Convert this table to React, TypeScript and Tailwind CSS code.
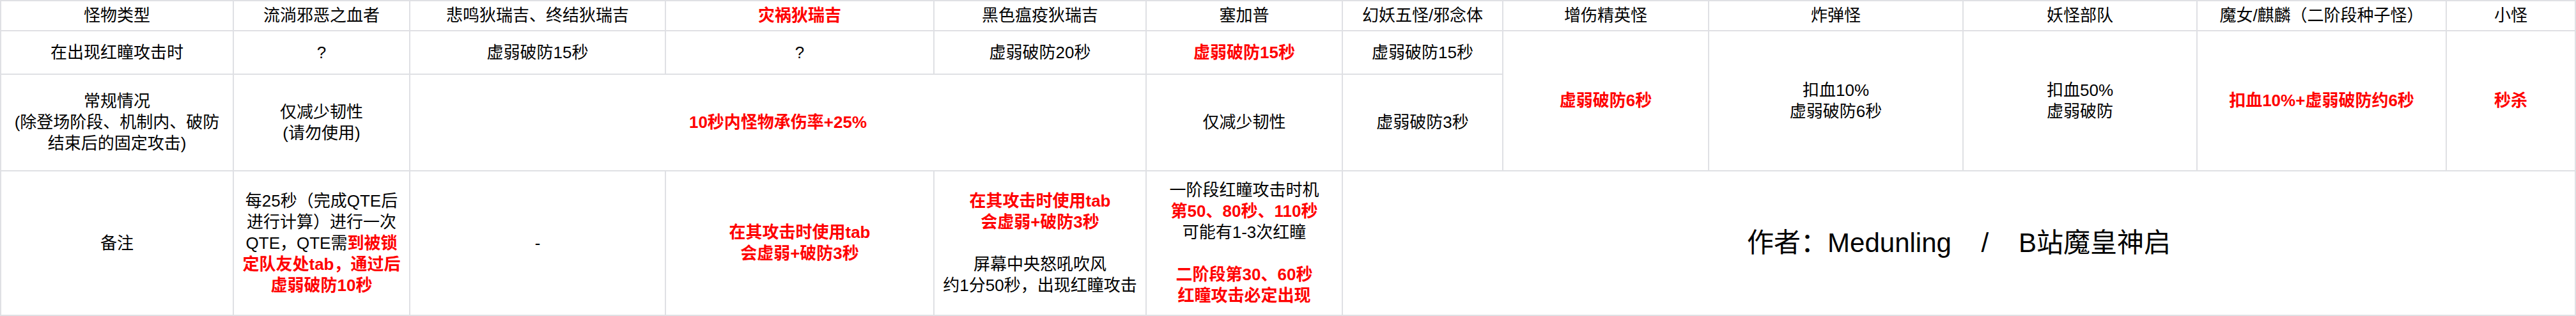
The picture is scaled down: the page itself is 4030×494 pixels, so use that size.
import React from "react";

const R = ({ children }: { children: React.ReactNode }) => (
  <span className="font-bold text-[#ff0000]">{children}</span>
);

const Cell = ({
  children,
  className = "",
}: {
  children?: React.ReactNode;
  className?: string;
}) => (
  <div
    className={
      "flex items-center justify-center bg-white text-center text-[26px] leading-[33px] text-black " +
      className
    }
  >
    <div>{children}</div>
  </div>
);

export default function App() {
  return (
    <div className="w-[4030px] h-[494px] bg-white font-['Liberation_Sans','Noto_Sans_CJK_SC',sans-serif]">
      <div className="grid h-[494px] w-[4030px] grid-cols-[362px_274px_398px_418px_330px_305px_249px_320px_396px_364px_388px_200px] grid-rows-[45px_66px_149px_224px] gap-[2px] bg-[#dfe0e4] p-[2px]">
        {/* Header row */}
        <Cell>怪物类型</Cell>
        <Cell>流淌邪恶之血者</Cell>
        <Cell>悲鸣狄瑞吉、终结狄瑞吉</Cell>
        <Cell>
          <R>灾祸狄瑞吉</R>
        </Cell>
        <Cell>黑色瘟疫狄瑞吉</Cell>
        <Cell>塞加普</Cell>
        <Cell>幻妖五怪/邪念体</Cell>
        <Cell>增伤精英怪</Cell>
        <Cell>炸弹怪</Cell>
        <Cell>妖怪部队</Cell>
        <Cell>魔女/麒麟（二阶段种子怪）</Cell>
        <Cell>小怪</Cell>

        {/* Row 1 */}
        <Cell>在出现红瞳攻击时</Cell>
        <Cell>?</Cell>
        <Cell>虚弱破防15秒</Cell>
        <Cell>?</Cell>
        <Cell>虚弱破防20秒</Cell>
        <Cell>
          <R>虚弱破防15秒</R>
        </Cell>
        <Cell>虚弱破防15秒</Cell>
        <Cell className="row-span-2">
          <R>虚弱破防6秒</R>
        </Cell>
        <Cell className="row-span-2">
          扣血10%
          <br />
          虚弱破防6秒
        </Cell>
        <Cell className="row-span-2">
          扣血50%
          <br />
          虚弱破防
        </Cell>
        <Cell className="row-span-2">
          <R>扣血10%+虚弱破防约6秒</R>
        </Cell>
        <Cell className="row-span-2">
          <R>秒杀</R>
        </Cell>

        {/* Row 2 */}
        <Cell>
          常规情况
          <br />
          (除登场阶段、机制内、破防
          <br />
          结束后的固定攻击)
        </Cell>
        <Cell>
          仅减少韧性
          <br />
          (请勿使用)
        </Cell>
        <Cell className="col-span-3">
          <R>10秒内怪物承伤率+25%</R>
        </Cell>
        <Cell>仅减少韧性</Cell>
        <Cell>虚弱破防3秒</Cell>

        {/* Row 3 */}
        <Cell>备注</Cell>
        <Cell>
          每25秒（完成QTE后
          <br />
          进行计算）进行一次
          <br />
          QTE，QTE需<R>到被锁</R>
          <br />
          <R>定队友处tab，通过后</R>
          <br />
          <R>虚弱破防10秒</R>
        </Cell>
        <Cell>-</Cell>
        <Cell>
          <R>
            在其攻击时使用tab
            <br />
            会虚弱+破防3秒
          </R>
        </Cell>
        <Cell>
          <R>
            在其攻击时使用tab
            <br />
            会虚弱+破防3秒
          </R>
          <br />
          <br />
          屏幕中央怒吼吹风
          <br />
          约1分50秒，出现红瞳攻击
        </Cell>
        <Cell>
          一阶段红瞳攻击时机
          <br />
          <R>第50、80秒、110秒</R>
          <br />
          可能有1-3次红瞳
          <br />
          <br />
          <R>二阶段第30、60秒</R>
          <br />
          <R>红瞳攻击必定出现</R>
        </Cell>
        <Cell className="col-span-6">
          <span className="whitespace-pre text-[42px] leading-[50px]">
            {"作者：Medunling    /    B站魔皇神启"}
          </span>
        </Cell>
      </div>
    </div>
  );
}
